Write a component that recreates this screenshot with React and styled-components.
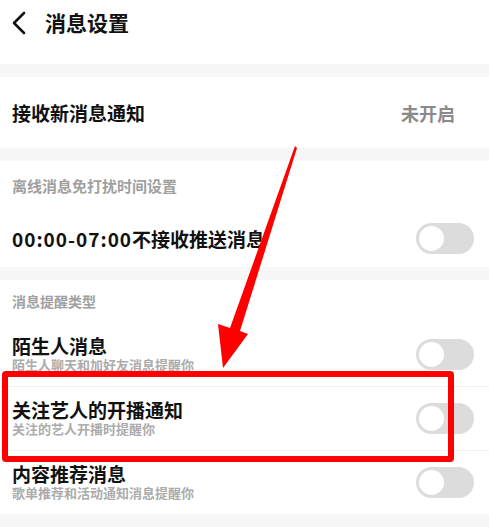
import React from 'react'
import styled, { createGlobalStyle } from 'styled-components'

const GlobalStyle = createGlobalStyle`
  body {
    margin: 0;
    background: #ffffff;
    font-family: "Noto Sans CJK SC", "Noto Sans", sans-serif;
  }
`

const Page = styled.div`
  position: relative;
  width: 489px;
  height: 527px;
  overflow: hidden;
  background: #ffffff;
`

const Header = styled.div`
  height: 64px;
  display: flex;
  align-items: flex-start;
  padding: 8px 0 0 12px;
  box-sizing: border-box;
  gap: 17px;
`

const Back = styled.svg`
  width: 16px;
  height: 24px;
  margin-top: 3px;
`

const PageTitle = styled.h1`
  margin: 0;
  font-size: 21px;
  line-height: 28px;
  font-weight: 700;
  color: #111;
`

const Band = styled.div`
  height: ${({ h }) => h || 13}px;
  background: #f7f7f7;
`

const SectionTitle = styled.div`
  height: ${({ h }) => h}px;
  display: flex;
  align-items: center;
  padding-left: 12px;
  font-size: ${({ size }) => size}px;
  font-weight: 700;
  color: #a0a0a0;
`

const Row = styled.div`
  height: ${({ h }) => h}px;
  display: flex;
  align-items: center;
  justify-content: space-between;
  padding: 0 15px 0 12px;
  box-sizing: border-box;
  border-bottom: ${({ line }) => (line ? '1px solid #f1f1f1' : 'none')};
`

const Texts = styled.div`
  display: flex;
  flex-direction: column;
`

const Label = styled.div`
  font-size: 19px;
  line-height: 21px;
  font-weight: 700;
  color: #111;
`

const Time = styled.span`
  letter-spacing: 1px;
`

const Sub = styled.div`
  font-size: 13px;
  line-height: 18px;
  font-weight: 700;
  color: #acacac;
`

const Value = styled.div`
  font-size: 18px;
  font-weight: 700;
  color: #8a8a8a;
  margin-right: 19px;
`

const Track = styled.div`
  width: 58px;
  height: 31px;
  border-radius: 16px;
  background: #dcdcdc;
  display: flex;
  align-items: center;
  padding-left: 3px;
  box-sizing: border-box;
  flex-shrink: 0;
`

const Knob = styled.div`
  width: 25px;
  height: 25px;
  border-radius: 50%;
  background: #ffffff;
`

const Highlight = styled.div`
  position: absolute;
  left: 2px;
  top: 371px;
  width: 452px;
  height: 91px;
  border: 6px solid #ff0000;
  border-radius: 4px;
  box-sizing: border-box;
  pointer-events: none;
`

const Arrow = styled.svg`
  position: absolute;
  left: 0;
  top: 0;
  width: 489px;
  height: 527px;
  pointer-events: none;
`

function Toggle() {
  return (
    <Track>
      <Knob />
    </Track>
  )
}

function App() {
  return (
    <Page>
      <GlobalStyle />
      <Header>
        <Back viewBox="0 0 16 24">
          <polyline points="12,2 2,12 12,22" fill="none" stroke="#111" strokeWidth="2.6" strokeLinecap="round" strokeLinejoin="round" />
        </Back>
        <PageTitle>消息设置</PageTitle>
      </Header>
      <Band />
      <Row h={71}>
        <Label>接收新消息通知</Label>
        <Value>未开启</Value>
      </Row>
      <Band />
      <SectionTitle h={49} size={15}>离线消息免打扰时间设置</SectionTitle>
      <Row h={57}>
        <Label><Time>00:00-07:00</Time>不接收推送消息</Label>
        <Toggle />
      </Row>
      <Band />
      <SectionTitle h={42} size={14}>消息提醒类型</SectionTitle>
      <Row h={65} line>
        <Texts>
          <Label>陌生人消息</Label>
          <Sub>陌生人聊天和加好友消息提醒你</Sub>
        </Texts>
        <Toggle />
      </Row>
      <Row h={64} line>
        <Texts>
          <Label>关注艺人的开播通知</Label>
          <Sub>关注的艺人开播时提醒你</Sub>
        </Texts>
        <Toggle />
      </Row>
      <Row h={63}>
        <Texts>
          <Label>内容推荐消息</Label>
          <Sub>歌单推荐和活动通知消息提醒你</Sub>
        </Texts>
        <Toggle />
      </Row>
      <Band h={20} />
      <Highlight />
      <Arrow viewBox="0 0 489 527">
        <polygon points="295,146 297,148 240,331 248,334 223,368 218,324 230,328" fill="#ff0000" />
      </Arrow>
    </Page>
  )
}

export default App
